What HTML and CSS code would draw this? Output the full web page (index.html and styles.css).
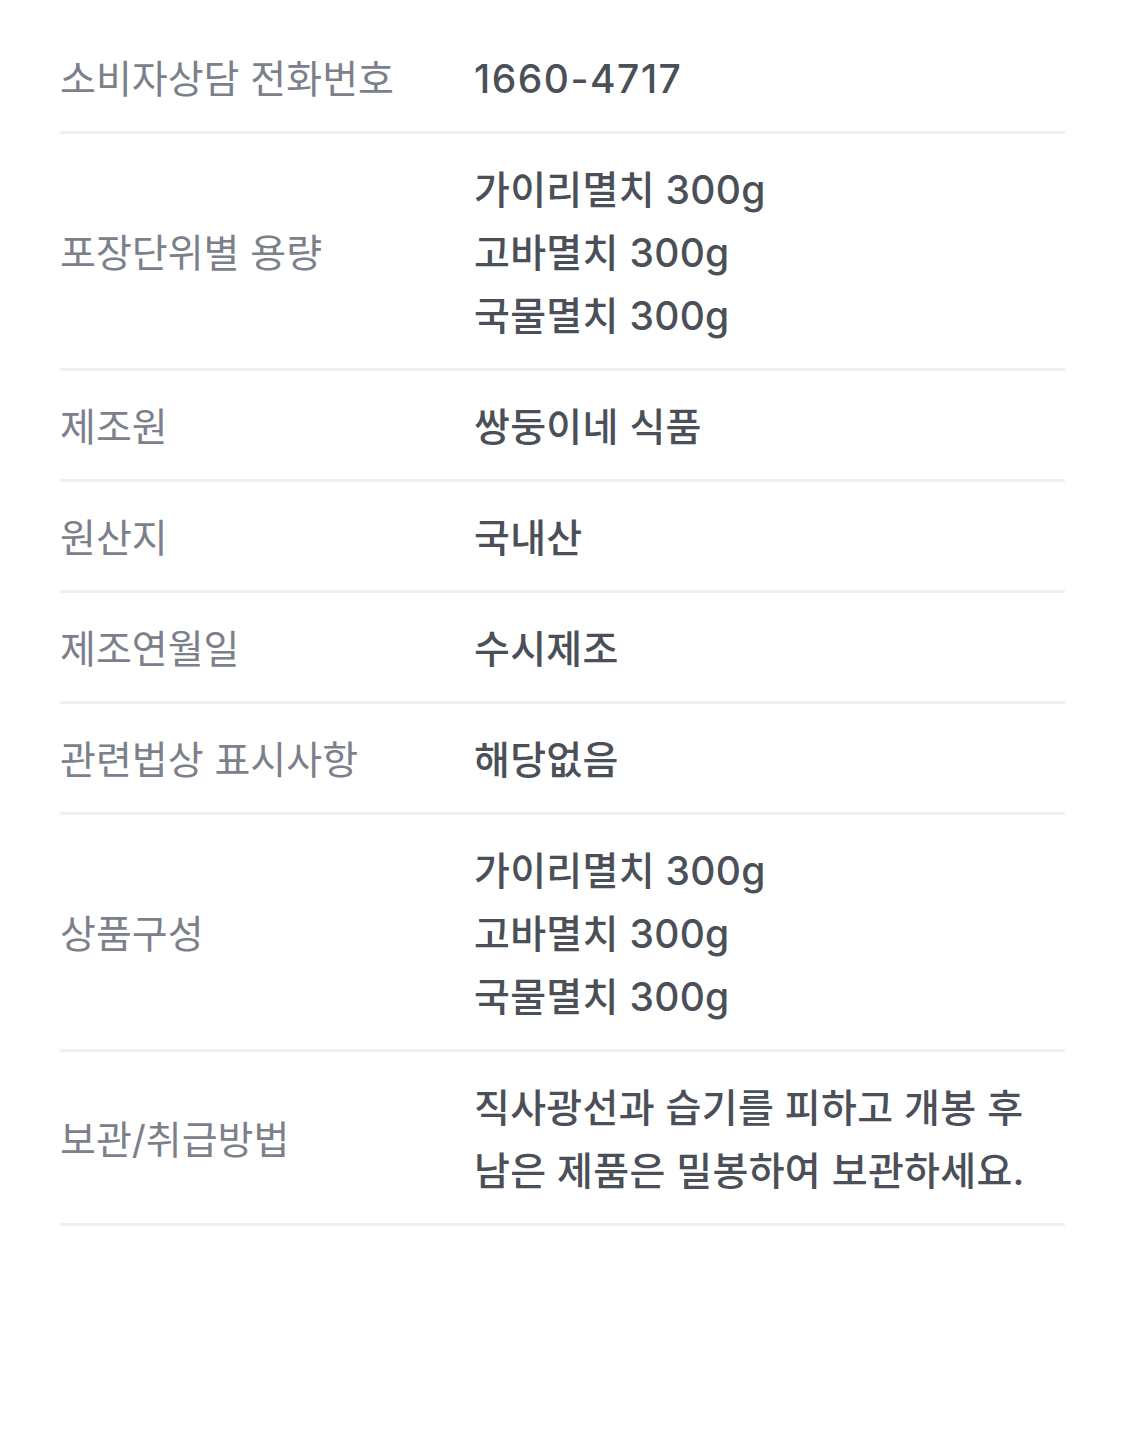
FILE: index.html
```html
<!DOCTYPE html>
<html lang="ko">
<head>
<meta charset="utf-8">
<link rel="stylesheet" href="styles.css">
</head>
<body>
<div class="info">
  <div class="row">
    <div class="label">소비자상담 전화번호</div>
    <div class="value phone">1660-4717</div>
  </div>
  <div class="row">
    <div class="label">포장단위별 용량</div>
    <div class="value">가이리멸치 300g<br>고바멸치 300g<br>국물멸치 300g</div>
  </div>
  <div class="row">
    <div class="label">제조원</div>
    <div class="value">쌍둥이네 식품</div>
  </div>
  <div class="row">
    <div class="label">원산지</div>
    <div class="value">국내산</div>
  </div>
  <div class="row">
    <div class="label">제조연월일</div>
    <div class="value">수시제조</div>
  </div>
  <div class="row">
    <div class="label">관련법상 표시사항</div>
    <div class="value">해당없음</div>
  </div>
  <div class="row">
    <div class="label">상품구성</div>
    <div class="value">가이리멸치 300g<br>고바멸치 300g<br>국물멸치 300g</div>
  </div>
  <div class="row">
    <div class="label">보관/취급방법</div>
    <div class="value">직사광선과 습기를 피하고 개봉 후 남은 제품은 밀봉하여 보관하세요.</div>
  </div>
</div>
</body>
</html>
```
FILE: styles.css
```css
html, body {
  margin: 0;
  padding: 0;
  background: #ffffff;
}
body {
  font-family: "Inter", "Noto Sans CJK KR", "Noto Sans", sans-serif;
  font-size: 39px;
  line-height: 63px;
}
.info {
  padding: 23px 60px 0 60px;
}
.row {
  display: flex;
  align-items: center;
  padding: 24px 0 21px 0;
  border-bottom: 3px solid #f0f0f1;
}
.label {
  width: 414px;
  flex-shrink: 0;
  color: #7c808b;
}
.value {
  flex: 1;
  color: #4b4f58;
  font-weight: 500;
  letter-spacing: 0.3px;
  word-break: keep-all;
}
.phone {
  letter-spacing: 1.5px;
}
```
